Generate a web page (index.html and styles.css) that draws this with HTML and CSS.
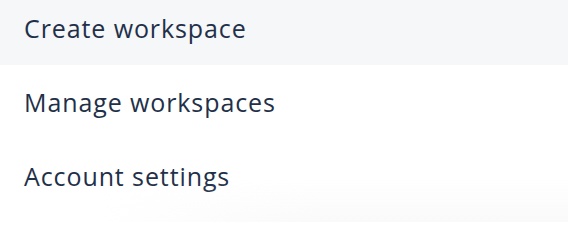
FILE: index.html
```html
<!DOCTYPE html>
<html>
<head>
<meta charset="utf-8">
<link rel="stylesheet" href="styles.css">
</head>
<body>
<div class="menu">
  <div class="item active">Create workspace</div>
  <div class="item">Manage workspaces</div>
  <div class="item">Account settings</div>
</div>
</body>
</html>
```
FILE: styles.css
```css
html, body {
  margin: 0;
  padding: 0;
  background: #ffffff;
  overflow: hidden;
}
body {
  width: 568px;
  height: 222px;
  position: relative;
}
body::after {
  content: "";
  position: absolute;
  left: 0;
  right: 0;
  bottom: 0;
  height: 44px;
  background: linear-gradient(to bottom, rgba(242,242,242,0), rgba(242,242,242,0.4));
  -webkit-mask-image: linear-gradient(to right, transparent 90px, #000 320px);
  mask-image: linear-gradient(to right, transparent 90px, #000 320px);
  pointer-events: none;
}
.menu {
  margin-top: -9px;
  display: flex;
  flex-direction: column;
}
.item {
  height: 74px;
  padding-left: 24px;
  display: flex;
  align-items: center;
  font-family: "Open Sans", "Noto Sans", sans-serif;
  font-size: 25px;
  letter-spacing: 0.9px;
  color: #1f3049;
  font-variant-ligatures: none;
}
.item.active {
  background: #f5f7f9;
}
```
